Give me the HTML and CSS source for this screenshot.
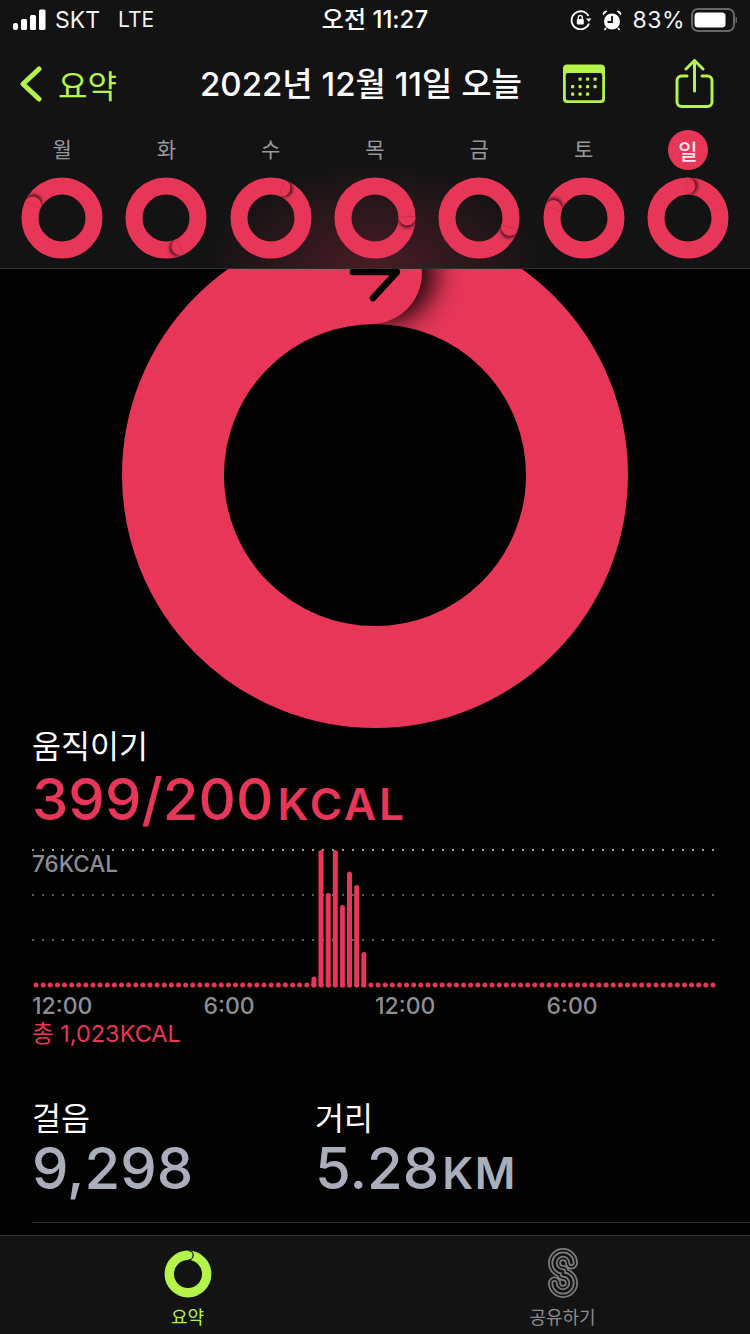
FILE: index.html
```html
<!DOCTYPE html>
<html lang="ko">
<head>
<meta charset="utf-8">
<title>활동 요약</title>
<link rel="stylesheet" href="styles.css">
</head>
<body>
<svg class="defs" width="0" height="0" aria-hidden="true">
  <defs>
    <filter id="miniBlur" x="-60%" y="-60%" width="220%" height="220%"><feGaussianBlur stdDeviation="1.6"/></filter>
    <filter id="bigBlur" x="-60%" y="-60%" width="220%" height="220%"><feGaussianBlur stdDeviation="13"/></filter>
    <clipPath id="miniClip"><path clip-rule="evenodd" d="M-40.5 0a40.5 40.5 0 1 0 81 0a40.5 40.5 0 1 0 -81 0zM-23.5 0a23.5 23.5 0 1 0 47 0a23.5 23.5 0 1 0 -47 0z"/></clipPath>
    <clipPath id="miniHalf"><rect x="0" y="-41" width="41" height="41"/></clipPath>
    <clipPath id="bigClip"><path clip-rule="evenodd" d="M-253 0a253 253 0 1 0 506 0a253 253 0 1 0 -506 0zM-151 0a151 151 0 1 0 302 0a151 151 0 1 0 -302 0z"/></clipPath>
    <clipPath id="bigHalf"><rect x="-4" y="-253" width="257" height="253"/></clipPath>
    <g id="miniCap">
      <g clip-path="url(#miniClip)"><g clip-path="url(#miniHalf)"><circle cx="2.6" cy="-32" r="8.5" fill="#000" fill-opacity=".62" filter="url(#miniBlur)"/></g></g>
      <path d="M0-40.500a8.500 8.500 0 0 1 0 17z" fill="#e73658"/>
    </g>
    <circle id="miniRing" r="32" fill="none" stroke="#e73658" stroke-width="17"/>
  </defs>
</svg>

<header class="top">
  <div class="status">
    <div class="status-left">
      <svg class="signal" width="34" height="22" viewBox="0 0 34 22"><rect x="0" y="14" width="5" height="7" rx="2" fill="#fff"/><rect x="8" y="10" width="6" height="11" rx="1.5" fill="#fff"/><rect x="17" y="6" width="6" height="15" rx="1.5" fill="#fff"/><rect x="26" y="0.5" width="6.5" height="20.5" rx="1.5" fill="#fff"/></svg>
      <span>SKT</span><span class="lte">LTE</span>
    </div>
    <div class="status-time">오전 11:27</div>
    <div class="status-right">
      <svg width="22" height="20" viewBox="0 0 22 20"><path d="M18.500 6A9 9 0 1 0 19 13.500" fill="none" stroke="#fff" stroke-width="1.800"/><path d="M16 8.500h5.500l-2.700 3.500z" fill="#fff"/><rect x="6.800" y="9" width="7" height="5.500" rx="1" fill="#fff"/><path d="M8.300 9V7.500a2 2 0 0 1 4 0V9" fill="none" stroke="#fff" stroke-width="1.300"/></svg>
      <svg class="alarm" width="20" height="21" viewBox="0 0 20 21"><circle cx="10" cy="11.500" r="8" fill="#fff"/><path d="M10 6v6H5.500" fill="none" stroke="#131313" stroke-width="1.800"/><path d="M1 5.500a3.500 3.500 0 0 1 4.500-4.500zM19 5.500a3.500 3.500 0 0 0-4.500-4.500z" fill="#fff"/><path d="M4 18l-1.500 2M16 18l1.500 2" stroke="#fff" stroke-width="1.600"/></svg>
      <span class="pct">83%</span>
      <svg width="46" height="24" viewBox="0 0 46 24"><rect x="1" y="1" width="42" height="22" rx="6" fill="none" stroke="#666" stroke-width="2"/><rect x="3.500" y="4.500" width="31" height="15" rx="3.500" fill="#fff"/><path d="M44.500 8.500a4 4 0 0 1 0 7z" fill="#666"/></svg>
    </div>
  </div>

  <nav class="nav">
    <div class="back">
      <svg width="22" height="36" viewBox="0 0 22 36"><path d="M19 3 3 18l16 15" fill="none" stroke="#b5f24a" stroke-width="5" stroke-linecap="round" stroke-linejoin="round"/></svg>
      <span>요약</span>
    </div>
    <div class="title">2022년 12월 11일 오늘</div>
    <div class="actions">
      <svg class="calendar" width="44" height="40" viewBox="0 0 44 40">
        <rect x="1" y="0.500" width="42" height="38.500" rx="4" fill="#b5f24a"/>
        <rect x="3.800" y="9" width="36.400" height="27.200" rx="2" fill="#131313"/>
        <g fill="#b5f24a">
          <rect x="16.500" y="13.500" width="3.200" height="3.200" rx=".8"/><rect x="24" y="13.500" width="3.200" height="3.200" rx=".8"/><rect x="31.500" y="13.500" width="3.200" height="3.200" rx=".8"/>
          <rect x="9" y="21" width="3.200" height="3.200" rx=".8"/><rect x="16.500" y="21" width="3.200" height="3.200" rx=".8"/><rect x="24" y="21" width="3.200" height="3.200" rx=".8"/><rect x="31.500" y="21" width="3.200" height="3.200" rx=".8"/>
          <rect x="9" y="28.500" width="3.200" height="3.200" rx=".8"/><rect x="16.500" y="28.500" width="3.200" height="3.200" rx=".8"/><rect x="24" y="28.500" width="3.200" height="3.200" rx=".8"/>
        </g>
      </svg>
      <svg class="share" width="40" height="50" viewBox="0 0 40 50">
        <g fill="none" stroke="#b5f24a" stroke-width="3" stroke-linecap="round" stroke-linejoin="round">
          <path d="M12 17H6.500a4.500 4.500 0 0 0-4.500 4.500V43a4.500 4.500 0 0 0 4.500 4.500h26A4.500 4.500 0 0 0 37 43V21.500a4.500 4.500 0 0 0-4.500-4.500H27"/>
          <path d="M19.500 32V3M11 10l8.500-8.500L28 10"/>
        </g>
      </svg>
    </div>
  </nav>

  <div class="week">
    <div class="day"><span class="day-label">월</span><svg class="mini" width="82" height="82" viewBox="-41 -41 82 82"><use href="#miniRing"/><use href="#miniCap" transform="rotate(-66)"/></svg></div>
    <div class="day"><span class="day-label">화</span><svg class="mini" width="82" height="82" viewBox="-41 -41 82 82"><use href="#miniRing"/><use href="#miniCap" transform="rotate(154)"/></svg></div>
    <div class="day"><span class="day-label">수</span><svg class="mini" width="82" height="82" viewBox="-41 -41 82 82"><use href="#miniRing"/><use href="#miniCap" transform="rotate(20)"/></svg></div>
    <div class="day"><span class="day-label">목</span><svg class="mini" width="82" height="82" viewBox="-41 -41 82 82"><use href="#miniRing"/><use href="#miniCap" transform="rotate(88)"/></svg></div>
    <div class="day"><span class="day-label">금</span><svg class="mini" width="82" height="82" viewBox="-41 -41 82 82"><use href="#miniRing"/><use href="#miniCap" transform="rotate(107)"/></svg></div>
    <div class="day"><span class="day-label">토</span><svg class="mini" width="82" height="82" viewBox="-41 -41 82 82"><use href="#miniRing"/><use href="#miniCap" transform="rotate(-73)"/></svg></div>
    <div class="day"><span class="day-label day-today">일</span><svg class="mini" width="82" height="82" viewBox="-41 -41 82 82"><use href="#miniRing"/><use href="#miniCap" transform="rotate(-2)"/></svg></div>
  </div>
</header>

<main class="main">
  <div class="big-ring">
    <svg width="506" height="459" viewBox="-253 -206 506 459">
      <circle r="202" fill="none" stroke="#e73658" stroke-width="102"/>
      <g clip-path="url(#bigClip)"><g clip-path="url(#bigHalf)"><circle cx="10" cy="-202" r="51" fill="#000" fill-opacity=".85" filter="url(#bigBlur)"/></g></g>
      <path d="M-4-253a51 51 0 0 1 0 102z" fill="#e73658"/>
      <path d="M-22-203H22L-2-177" fill="none" stroke="#000" stroke-width="6.500" stroke-linecap="round" stroke-linejoin="round"/>
    </svg>
  </div>

  <section class="move">
    <div class="label">움직이기</div>
    <div class="value value-move">399/200<span class="unit">KCAL</span></div>
  </section>

  <section class="chart">
    <div class="chart-plot">
      <svg width="718" height="146" viewBox="0 0 718 146">
        <g fill="none" stroke-linecap="butt">
          <line x1="0" x2="686" y1="5" y2="5" stroke="#9a9a9a" stroke-width="2" stroke-dasharray="2 8"/>
          <line x1="0" x2="686" y1="50" y2="50" stroke="#5c5c5c" stroke-width="2" stroke-dasharray="2 8"/>
          <line x1="0" x2="686" y1="95" y2="95" stroke="#5c5c5c" stroke-width="2" stroke-dasharray="2 8"/>
        </g>
        <line x1="4" x2="682" y1="140" y2="140" stroke="#e73658" stroke-width="5" stroke-linecap="round" stroke-dasharray="0 7.126"/>
        <g stroke="#e73658" stroke-width="5" stroke-linecap="round">
          <line x1="281.900" x2="281.900" y1="134" y2="140"/>
          <line x1="289" x2="289" y1="7.500" y2="140"/>
          <line x1="296.200" x2="296.200" y1="50.500" y2="140"/>
          <line x1="303.300" x2="303.300" y1="7.500" y2="140"/>
          <line x1="310.400" x2="310.400" y1="62.500" y2="140"/>
          <line x1="317.500" x2="317.500" y1="29" y2="140"/>
          <line x1="324.700" x2="324.700" y1="42.500" y2="140"/>
          <line x1="331.800" x2="331.800" y1="109.500" y2="140"/>
        </g>
      </svg>
      <span class="chart-max">76KCAL</span>
    </div>
    <div class="axis"><span>12:00</span><span>6:00</span><span>12:00</span><span>6:00</span></div>
    <div class="total">총 1,023KCAL</div>
  </section>

  <section class="stats">
    <div class="stat stat-steps">
      <div class="label">걸음</div>
      <div class="value value-stat">9,298</div>
    </div>
    <div class="stat">
      <div class="label">거리</div>
      <div class="value value-stat">5.28<span class="unit">KM</span></div>
    </div>
  </section>
  <div class="divider"></div>
</main>

<footer class="tabs">
  <div class="tab tab-active">
    <svg width="48" height="48" viewBox="-24 -24 48 48">
      <circle r="18.700" fill="none" stroke="#b5f24a" stroke-width="9.400"/>
      <path d="M0.500-23.400a4.700 4.700 0 0 1 0 9.400" fill="none" stroke="#131313" stroke-width="1.200"/>
    </svg>
    <span>요약</span>
  </div>
  <div class="tab">
    <svg class="sharing" width="30" height="50" viewBox="0 0 30 50">
      <g fill="none" stroke-linecap="round" stroke-linejoin="round">
        <path d="M23.500 15a8.500 8.500 0 1 0-8.500 8.500V26.500a8.500 8.500 0 1 1-8.500 8.500" stroke="#7c7c7c" stroke-width="13"/>
        <path d="M23.500 15a8.500 8.500 0 1 0-8.500 8.500V26.500a8.500 8.500 0 1 1-8.500 8.500" stroke="#131313" stroke-width="9.400"/>
        <path d="M23.500 15a8.500 8.500 0 1 0-8.500 8.500V26.500a8.500 8.500 0 1 1-8.500 8.500" stroke="#7c7c7c" stroke-width="6.200"/>
        <path d="M23.500 15a8.500 8.500 0 1 0-8.500 8.500V26.500a8.500 8.500 0 1 1-8.500 8.500" stroke="#131313" stroke-width="2.600"/>
      </g>
    </svg>
    <span>공유하기</span>
  </div>
</footer>
</body>
</html>
```
FILE: styles.css
```css
* { box-sizing: border-box; }
html, body { margin: 0; padding: 0; }
body {
  width: 750px;
  height: 1334px;
  overflow: hidden;
  display: flex;
  flex-direction: column;
  background: #000;
  color: #fff;
  font-family: Inter, "Noto Sans CJK KR", sans-serif;
}
svg { display: block; }
.defs { position: absolute; }

.top {
  flex: none;
  height: 269px;
  background: radial-gradient(ellipse 170px 105px at 375px 100%, rgba(231, 54, 88, .26), rgba(231, 54, 88, 0)), #131313;
  border-bottom: 1px solid #2e2e2e;
}

.status {
  height: 40px;
  padding: 0 13px;
  display: grid;
  grid-template-columns: 1fr auto 1fr;
  align-items: center;
  font-size: 23px;
  line-height: 40px;
}
.status-left { display: flex; align-items: center; gap: 8px; color: #f2f2f2; }
.lte { margin-left: 10px; font-size: 21px; }
.status-time { font-size: 24px; font-weight: 500; }
.status-right { display: flex; align-items: center; justify-content: flex-end; gap: 10px; }
.status-right .pct { margin-right: -4px; color: #f2f2f2; letter-spacing: .5px; }

.nav {
  height: 88px;
  padding: 0 0 0 20px;
  display: flex;
  align-items: center;
}
.back { display: flex; align-items: center; gap: 16px; width: 180px; color: #b5f24a; font-size: 32px; }
.title { width: 362px; padding-bottom: 5px; font-size: 33px; font-weight: 500; white-space: nowrap; }
.actions { display: flex; align-items: center; gap: 69px; }
.share { margin-top: -1px; }

.week {
  padding: 0 10px;
  display: grid;
  grid-template-columns: repeat(7, 1fr);
}
.day { display: flex; flex-direction: column; align-items: center; gap: 5px; }
.day-label {
  width: 40px;
  height: 44px;
  padding-bottom: 4px;
  display: flex;
  align-items: center;
  justify-content: center;
  color: #98989e;
  font-size: 21px;
}
.day-today {
  height: 40px;
  margin: 2px 0;
  padding: 0;
  border-radius: 50%;
  background: #e73658;
  color: #fbe4ea;
  font-weight: 500;
}

.main { flex: 1; min-height: 0; overflow: hidden; }
.big-ring { height: 459px; display: flex; justify-content: center; }

.move { padding: 1px 32px 0; }
.label { font-size: 31.5px; line-height: 36px; }
.value { font-weight: 500; }
.value-move { color: #e73658; font-size: 58px; line-height: 62px; margin-top: 3px; }
.unit { font-size: 44px; line-height: 1; font-weight: 600; margin-left: 4px; letter-spacing: 3px; }

.chart { padding: 0 0 0 32px; margin-top: 15px; }
.chart-plot { position: relative; height: 146px; }
.chart-max {
  position: absolute;
  left: 0;
  top: 5px;
  color: #8e8e93;
  font-size: 22.5px;
  font-weight: 500;
  line-height: 28px;
}
.axis {
  display: grid;
  grid-template-columns: repeat(4, 171.500px);
  color: #8e8e93;
  font-size: 23px;
  font-weight: 500;
  line-height: 30px;
}
.total { color: #e73658; font-size: 23.5px; line-height: 26px; }

.stats { display: flex; padding: 0 32px; margin-top: 54px; }
.stat-steps { width: 283px; }
.value-stat { color: #aaaeba; font-size: 58px; line-height: 60px; margin-top: 1px; }
.value-stat .unit { margin-left: 3px; font-size: 44px; letter-spacing: 1.5px; }
.divider { height: 1px; margin: 24px 0 0 32px; background: #333; }

.tabs {
  flex: none;
  height: 99px;
  display: grid;
  grid-template-columns: 375px 375px;
  background: #131313;
  border-top: 1px solid #2e2e2e;
}
.tab {
  display: flex;
  flex-direction: column;
  align-items: center;
  color: #8a8a8e;
  font-size: 18px;
  line-height: 26px;
  padding-top: 14px;
}
.tab span { margin-top: 7px; }
.tab-active { color: #b5f24a; }
.sharing { margin-top: -2px; }
```
